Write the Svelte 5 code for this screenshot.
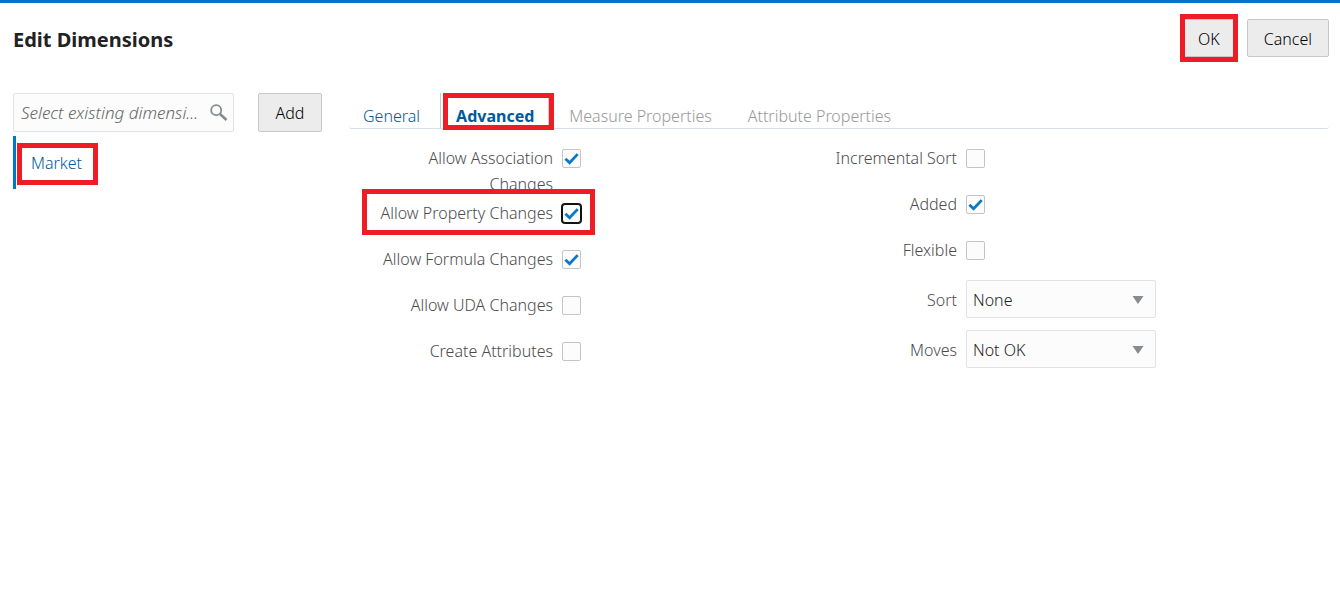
<script>
  let query = $state('');
  let activeTab = $state('Advanced');
  let sort = $state('None');
  let moves = $state('Not OK');

  const tabs = [
    { name: 'General' },
    { name: 'Advanced', marked: true },
    { name: 'Measure Properties', disabled: true },
    { name: 'Attribute Properties', disabled: true }
  ];

  const changes = $state([
    { id: 'association', label: 'Allow Association Changes', checked: true, tall: true },
    { id: 'property', label: 'Allow Property Changes', checked: true, marked: true },
    { id: 'formula', label: 'Allow Formula Changes', checked: true },
    { id: 'uda', label: 'Allow UDA Changes', checked: false },
    { id: 'attributes', label: 'Create Attributes', checked: false }
  ]);

  const options = $state([
    { id: 'incremental', label: 'Incremental Sort', checked: false },
    { id: 'added', label: 'Added', checked: true },
    { id: 'flexible', label: 'Flexible', checked: false }
  ]);
</script>

{#snippet checkRow(item)}
  <div class="row" class:tall={item.tall} class:mark={item.marked} class:focused={item.marked}>
    <label for={item.id}>{item.label}</label>
    <span class="check">
      <input type="checkbox" id={item.id} bind:checked={item.checked} />
      <svg viewBox="0 0 19 19" aria-hidden="true"><path d="M3.4 9.8 7.6 13.8 15.7 5.1" /></svg>
    </span>
  </div>
{/snippet}

{#snippet arrow()}
  <svg class="arrow" viewBox="0 0 12 8" aria-hidden="true"><path d="M0.5 0H11.5L6 8Z" /></svg>
{/snippet}

<div class="page">
  <header>
    <h1>Edit Dimensions</h1>
    <div class="actions">
      <button class="btn mark" type="button">OK</button>
      <button class="btn" type="button">Cancel</button>
    </div>
  </header>

  <div class="body">
    <aside>
      <div class="finder">
        <div class="search">
          <input type="text" aria-label="Select existing dimension" placeholder="Select existing dimensi..." bind:value={query} />
          <svg viewBox="0 0 18 18" aria-hidden="true">
            <circle cx="6.2" cy="6.2" r="5" />
            <path d="M10 10 16.5 16" />
          </svg>
        </div>
        <button class="btn add" type="button">Add</button>
      </div>
      <nav>
        <a class="mark" href="#market">Market</a>
      </nav>
    </aside>

    <main>
      <div class="tabs" role="tablist">
        {#each tabs as tab}
          <button
            type="button"
            role="tab"
            class:mark={tab.marked}
            class:active={activeTab === tab.name}
            aria-selected={activeTab === tab.name}
            disabled={tab.disabled}
            onclick={() => (activeTab = tab.name)}>{tab.name}</button>
        {/each}
      </div>

      <div class="form">
        <div class="group">
          {#each changes as item (item.id)}
            {@render checkRow(item)}
          {/each}
        </div>
        <div class="right">
          <div class="group">
            {#each options as item (item.id)}
              {@render checkRow(item)}
            {/each}
          </div>
          <div class="selects">
            <div class="row">
              <label for="sort">Sort</label>
              <span class="select">
                <select id="sort" bind:value={sort}>
                  <option>None</option>
                </select>
                {@render arrow()}
              </span>
            </div>
            <div class="row">
              <label for="moves">Moves</label>
              <span class="select">
                <select id="moves" bind:value={moves}>
                  <option>Not OK</option>
                </select>
                {@render arrow()}
              </span>
            </div>
          </div>
        </div>
      </div>
    </main>
  </div>
</div>

<style>
  :global(body) {
    margin: 0;
    background: #fff;
  }

  .page {
    box-sizing: border-box;
    min-height: 100vh;
    border-top: 3px solid #0572ce;
    padding: 16px 11px 16px 13px;
    font: 300 16px/26px 'Noto Sans', 'Open Sans', sans-serif;
    color: #333;
  }

  input,
  select,
  button {
    box-sizing: border-box;
    margin: 0;
    font: inherit;
  }

  header {
    display: flex;
    justify-content: space-between;
    align-items: center;
    margin-bottom: 36px;
  }

  h1 {
    margin: 0;
    padding-top: 4px;
    font-size: 20px;
    line-height: 26px;
    font-weight: 700;
    color: #222;
  }

  .actions {
    display: flex;
    gap: 10px;
  }

  .btn {
    height: 38px;
    padding: 2px 16px 0;
    border: 1px solid #c8c8c8;
    border-radius: 2px;
    background: #ececec;
    color: #000;
  }

  .mark {
    position: relative;
  }

  .mark::after {
    content: '';
    position: absolute;
    inset: -6px -1px;
    border: 5px solid #ee1c25;
    pointer-events: none;
  }

  .actions .mark::after {
    inset: -8px -2px -6px;
    top: -6px;
  }

  .body {
    display: flex;
    gap: 27px;
  }

  aside {
    flex: none;
  }

  .finder {
    display: flex;
    gap: 24px;
  }

  .search {
    position: relative;
    width: 221px;
  }

  .search input {
    width: 100%;
    height: 39px;
    padding: 0 30px 0 7px;
    border: 1px solid #e2e2e2;
    border-radius: 2px;
    background: #fcfcfc;
    color: #333;
    font-size: 17px;
  }

  .search input::placeholder {
    color: #666;
    font-style: italic;
    opacity: 1;
  }

  .search svg {
    position: absolute;
    right: 6px;
    top: 11px;
    width: 18px;
    height: 18px;
    fill: none;
    stroke: #858b90;
    stroke-width: 1.8;
  }

  .search path {
    stroke-width: 2.6;
  }

  .add {
    height: 39px;
    min-width: 64px;
    padding-top: 0;
  }

  nav {
    margin-top: 4px;
  }

  nav a {
    display: block;
    width: 72px;
    padding: 14px 0 13px 15px;
    border-left: 3px solid #0078c8;
    color: #005a9c;
    text-decoration: none;
  }

  nav .mark::after {
    inset: 7px 5px 4px 1px;
  }

  main {
    flex: 1;
    min-width: 0;
  }

  .tabs {
    display: flex;
    height: 36px;
    box-sizing: border-box;
    border-bottom: 1px solid #d6dfe6;
    border-radius: 3px;
  }

  .tabs button {
    padding: 10px 20px 0 14px;
    border: 0;
    background: none;
    color: #005a9c;
    line-height: 26px;
  }

  .tabs .active {
    border: solid #c8ccd0;
    border-width: 0 1px;
    padding: 10px 14px 0 15px;
    font-weight: 700;
  }

  .tabs button:disabled {
    padding: 10px 16px 0 20px;
    color: #999;
  }

  .tabs .mark::after {
    inset: 0 -6px -2px 2px;
  }

  .form {
    display: grid;
    grid-template-columns: 404px 403px;
    padding-top: 16px;
  }

  .group {
    display: grid;
    align-content: start;
    gap: 20px;
  }

  .right {
    display: grid;
    align-content: start;
    gap: 17px;
  }

  .selects {
    display: grid;
    gap: 12px;
  }

  .row {
    display: flex;
    align-items: center;
    gap: 9px;
    min-height: 26px;
  }

  .row label {
    box-sizing: border-box;
    width: 204px;
    padding-left: 20px;
    text-align: right;
    color: #4c4c4c;
  }

  .tall {
    align-items: flex-start;
    margin-bottom: -17px;
  }

  .row.mark::after {
    inset: -11px 158px -9px 13px;
  }

  .check {
    display: grid;
    width: 19px;
    height: 26px;
    align-items: center;
  }

  .check input,
  .check svg {
    grid-area: 1 / 1;
    width: 19px;
    height: 19px;
  }

  .check input {
    appearance: none;
    border: 1px solid #c4c4c4;
    border-radius: 2px;
    background: #fcfcfc;
  }

  .focused input {
    border-color: #111;
    border-radius: 3px;
    box-shadow: 0 0 0 1px #111;
  }

  .check svg {
    fill: none;
    stroke: #0a7ac8;
    stroke-width: 2.8;
    pointer-events: none;
    visibility: hidden;
  }

  .check input:checked + svg {
    visibility: visible;
  }

  .select {
    position: relative;
    flex: 1;
  }

  .select select {
    display: block;
    width: 100%;
    height: 38px;
    padding: 2px 30px 0 6px;
    appearance: none;
    border: 1px solid #e2e2e2;
    border-radius: 2px;
    background: #fcfcfc;
    color: #222;
  }

  .selects label {
    padding-top: 2px;
  }

  .arrow {
    position: absolute;
    right: 12px;
    top: 16px;
    width: 12px;
    height: 8px;
    fill: #888b8e;
    pointer-events: none;
  }
</style>
